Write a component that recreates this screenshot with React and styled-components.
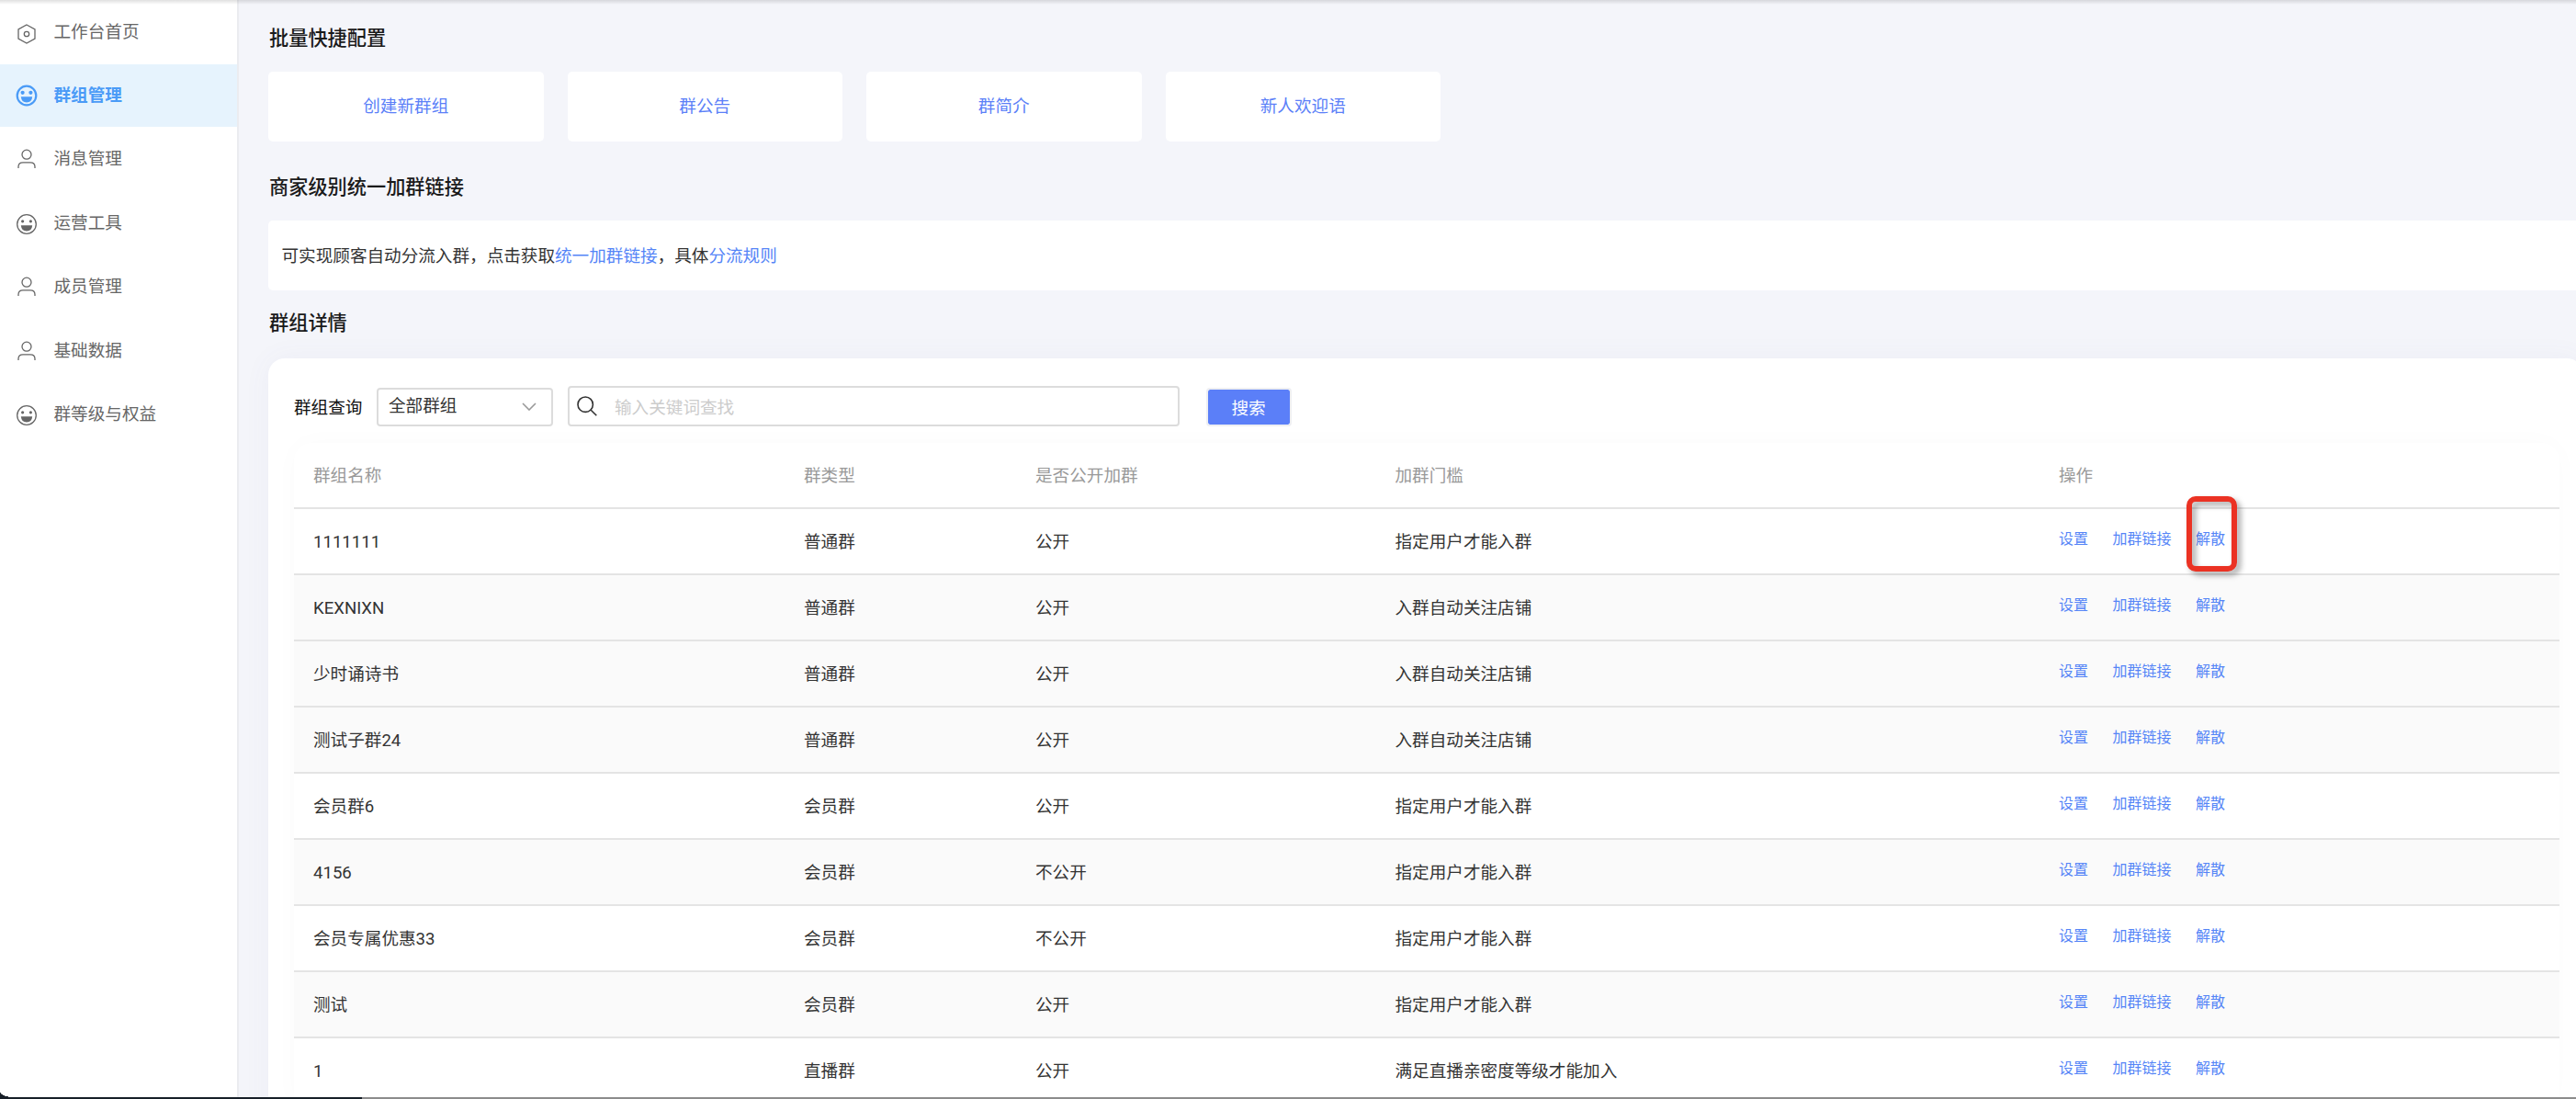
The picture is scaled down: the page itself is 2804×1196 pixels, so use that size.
import * as React from 'react';
import styled, { createGlobalStyle } from 'styled-components'

const menu = [
  { label: '工作台首页', icon: 'hex' },
  { label: '群组管理', icon: 'smile', active: true },
  { label: '消息管理', icon: 'user' },
  { label: '运营工具', icon: 'smile' },
  { label: '成员管理', icon: 'user' },
  { label: '基础数据', icon: 'user' },
  { label: '群等级与权益', icon: 'smile' },
];

const shortcuts = ['创建新群组', '群公告', '群简介', '新人欢迎语'];

const groups = [
  { cells: ['1111111', '普通群', '公开', '指定用户才能入群'], marked: true },
  { cells: ['KEXNIXN', '普通群', '公开', '入群自动关注店铺'], striped: true },
  { cells: ['少时诵诗书', '普通群', '公开', '入群自动关注店铺'], striped: true },
  { cells: ['测试子群24', '普通群', '公开', '入群自动关注店铺'], striped: true },
  { cells: ['会员群6', '会员群', '公开', '指定用户才能入群'] },
  { cells: ['4156', '会员群', '不公开', '指定用户才能入群'], striped: true },
  { cells: ['会员专属优惠33', '会员群', '不公开', '指定用户才能入群'] },
  { cells: ['测试', '会员群', '公开', '指定用户才能入群'], striped: true },
  { cells: ['1', '直播群', '公开', '满足直播亲密度等级才能加入'] },
];

function MenuIcon({ type, active }) {
  if (type === 'hex') {
    return (
      <IconSvg viewBox="0 0 24 24" $drop={2}>
        <path d="M12 2 L21 7 V17 L12 22 L3 17 V7 Z" />
        <circle cx="12" cy="12" r="2.7" />
      </IconSvg>
    );
  }
  if (type === 'user') {
    return (
      <IconSvg viewBox="0 0 24 24">
        <circle cx="12" cy="7.2" r="5" />
        <path d="M3 22 V20.5 Q3 15.8 8 15.8 H16 Q21 15.8 21 20.5 V22" />
      </IconSvg>
    );
  }
  return (
    <IconSvg viewBox="0 0 24 24" $drop={active ? 0 : 1.5} $bold={active}>
      <circle cx="12" cy="12" r="10.3" />
      <circle className="fill" cx="7.6" cy="8.8" r={active ? 2.1 : 1.6} />
      <circle className="fill" cx="16.4" cy="8.8" r={active ? 2.1 : 1.6} />
      <path className="fill" d="M5.8 13.2 H18.2 Q17.6 19.4 12 19.4 Q6.4 19.4 5.8 13.2 Z" />
    </IconSvg>
  );
}

export default function App() {
  return (
    <Page>
      <GlobalStyle />
      <Sidebar>
        {menu.map((item) => (
          <MenuItem key={item.label} $active={item.active}>
            <MenuIcon type={item.icon} active={item.active} />
            <span>{item.label}</span>
          </MenuItem>
        ))}
      </Sidebar>

      <Content>
        <Title>批量快捷配置</Title>
        <Shortcuts>
          {shortcuts.map((name) => (
            <Shortcut key={name}>{name}</Shortcut>
          ))}
        </Shortcuts>

        <Title>商家级别统一加群链接</Title>
        <LinkPanel>
          可实现顾客自动分流入群，点击获取<a>统一加群链接</a>，具体<a>分流规则</a>
        </LinkPanel>

        <Title $compact>群组详情</Title>
        <DetailPanel>
          <Filter>
            <Label>群组查询</Label>
            <Select>
              全部群组
              <svg width="16" height="9" viewBox="0 0 16 9">
                <path d="M1 1 L8 8 L15 1" />
              </svg>
            </Select>
            <SearchBox>
              <svg width="22" height="22" viewBox="0 0 22 22">
                <circle cx="9.2" cy="9.2" r="8.2" />
                <path d="M15 15 L21.3 21.3" />
              </svg>
              <input placeholder="输入关键词查找" />
            </SearchBox>
            <SearchButton>搜索</SearchButton>
          </Filter>

          <Table>
            <HeadRow>
              <span>群组名称</span>
              <span>群类型</span>
              <span>是否公开加群</span>
              <span>加群门槛</span>
              <span>操作</span>
            </HeadRow>
            {groups.map(({ cells, striped, marked }) => (
              <Row key={cells[0]} $striped={striped}>
                {cells.map((cell, n) => (
                  <span key={n}>{cell}</span>
                ))}
                <Actions>
                  <a>设置</a>
                  <a>加群链接</a>
                  <a>
                    解散
                    {marked && <Highlight />}
                  </a>
                </Actions>
              </Row>
            ))}
          </Table>
        </DetailPanel>
      </Content>
      <TopShade />
      <Corner />
      <BottomEdge />
    </Page>
  );
}

const GlobalStyle = createGlobalStyle`
  * {
    box-sizing: border-box;
  }

  body {
    margin: 0;
    overflow: hidden;
    font-family: Roboto, "Noto Sans CJK SC", sans-serif;
    font-size: 18.6px;
    line-height: 28px;
    color: #333;
  }
`

const Page = styled.div`
  position: relative;
  display: flex;
  height: 1196px;
  overflow: hidden;
  background: #f4f5fa;
`

const Sidebar = styled.div`
  flex: none;
  width: 260px;
  padding-top: 0.6px;
  border-right: 2px solid #ebecf0;
  background: #fff;
`

const MenuItem = styled.div`
  display: flex;
  align-items: center;
  gap: 18px;
  height: 68px;
  margin-bottom: 1.4px;
  padding-left: 16.5px;
  background: ${(p) => (p.$active ? '#e6f3fd' : 'transparent')};
  color: ${(p) => (p.$active ? '#4a9bf7' : '#666')};
  font-weight: ${(p) => (p.$active ? 700 : 400)};
`

const IconSvg = styled.svg`
  flex: none;
  width: 24px;
  height: 24px;
  margin-top: ${(p) => (p.$drop || 0) * 2}px;
  fill: none;
  stroke: currentColor;
  stroke-width: ${(p) => (p.$bold ? 2.2 : 1.3)};

  .fill {
    fill: currentColor;
    stroke: none;
  }
`

const Content = styled.div`
  flex: none;
  width: 2552px;
  padding: 4px 0 0 32px;
`

const Title = styled.div`
  height: 74px;
  padding-left: 1px;
  line-height: ${(p) => (p.$compact ? 72 : 76)}px;
  font-size: 21.2px;
  font-weight: 500;
  color: #1a1a1a;
`

const Shortcuts = styled.div`
  display: flex;
  gap: 26px;
  margin-bottom: 12px;
`

const Shortcut = styled.div`
  width: 299.5px;
  height: 76px;
  border-radius: 5px;
  background: #fff;
  color: #5b7ff8;
  line-height: 77px;
  text-align: center;
`

const LinkPanel = styled.div`
  height: 76px;
  padding-left: 14.5px;
  border-radius: 5px;
  background: #fff;
  line-height: 78px;

  a {
    color: #5585f7;
  }
`

const DetailPanel = styled.div`
  height: 900px;
  padding: 30px 26px 0 28px;
  border-radius: 18px;
  background: #fff;
  box-shadow: 0 0 30px rgba(90, 90, 160, 0.05);
`

const Filter = styled.div`
  display: flex;
  align-items: flex-end;
  height: 44px;
`

const Label = styled.div`
  width: 90px;
  line-height: 39px;
  color: #111;
`

const Select = styled.div`
  display: flex;
  align-items: center;
  justify-content: space-between;
  width: 192px;
  height: 42px;
  margin-right: 16px;
  padding: 0 16px 2px 11px;
  border: 2px solid #dcdcdc;
  border-radius: 4px;

  svg {
    fill: none;
    stroke: #999;
    stroke-width: 1.6;
  }
`

const SearchBox = styled.div`
  display: flex;
  align-items: center;
  width: 666px;
  height: 44px;
  margin-right: 28.5px;
  padding-left: 8px;
  border: 2px solid #dcdcdc;
  border-radius: 4px;

  svg {
    flex: none;
    fill: none;
    stroke: #333;
    stroke-width: 1.6;
  }

  input {
    flex: 1;
    padding: 4px 0 0 19px;
    border: 0;
    outline: 0;
    background: none;
    font: inherit;
  }

  input::placeholder {
    color: #ccc;
  }
`

const SearchButton = styled.button`
  width: 93px;
  height: 42px;
  padding: 3px 0 0;
  border: 2px solid #eeeff2;
  border-radius: 4px;
  background: #5b7ff8;
  background-clip: padding-box;
  color: #fff;
  font: inherit;
`

const Table = styled.div`
  margin-top: 18px;
  border-radius: 20px 20px 0 0;
  box-shadow: 0 0 30px rgba(0, 0, 0, 0.02);
`

const Row = styled.div`
  display: grid;
  grid-template-columns: 534px 252px 391.5px 722.5px 1fr;
  align-items: center;
  height: 72px;
  padding: 2px 0 0 21px;
  border-bottom: 2px solid #e4e4e4;
  background: ${(p) => (p.$striped ? '#fafafa' : '#fff')};
`

const HeadRow = styled(Row)`
  border-radius: 20px 20px 0 0;
  color: #999;
`

const Actions = styled.div`
  display: flex;
  gap: 26.5px;
  padding-bottom: 6px;
  font-size: 16px;

  a {
    position: relative;
    color: #5585f7;
  }
`

const Highlight = styled.i`
  position: absolute;
  top: -33px;
  left: -10px;
  width: 55px;
  height: 82px;
  border: 6px solid #eb3223;
  border-radius: 10px;
  filter: drop-shadow(4px 4px 3px rgba(0, 0, 0, 0.35));
`

const TopShade = styled.div`
  position: absolute;
  top: 0;
  left: 0;
  right: 0;
  height: 5px;
  background: linear-gradient(rgba(0, 0, 0, 0.12), rgba(0, 0, 0, 0));
`

// rounded window corner at the bottom left
const Corner = styled.div`
  position: absolute;
  left: 0;
  bottom: 2px;
  width: 14px;
  height: 6px;
  background: radial-gradient(ellipse 14px 6px at 100% 0, transparent 97%, #171f28 100%);
`

const BottomEdge = styled.div`
  position: absolute;
  left: 0;
  right: 0;
  bottom: 0;
  height: 2px;
  background: linear-gradient(to right, #171f28 394px, #8c8c8c 394px);
`
